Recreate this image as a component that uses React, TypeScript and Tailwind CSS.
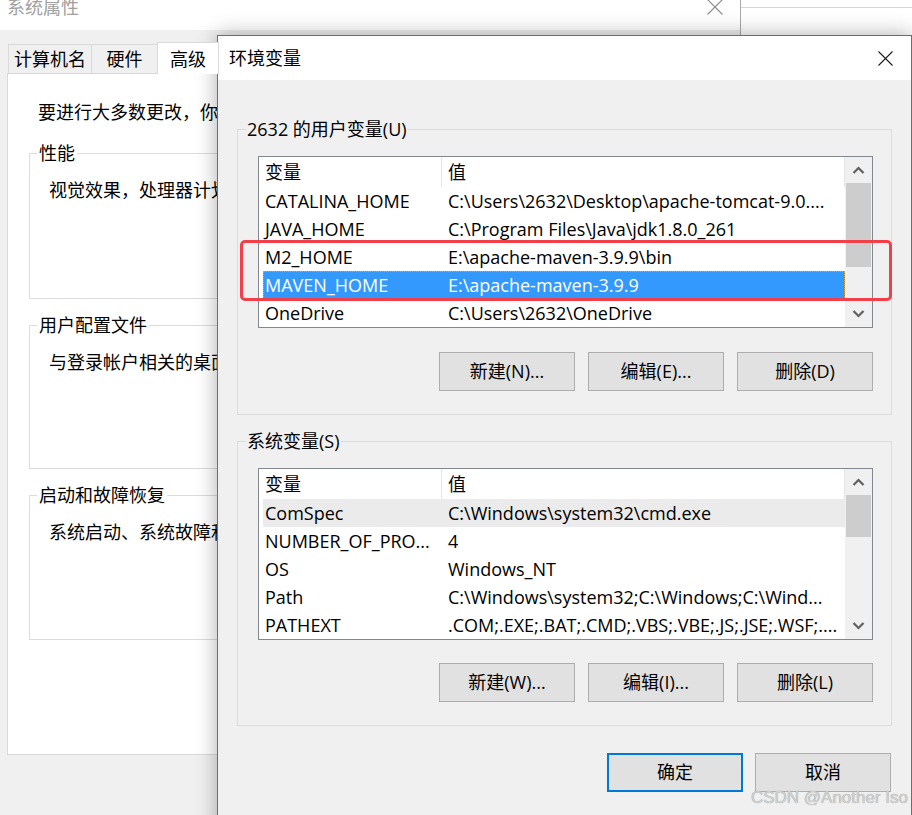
import React from "react";

const font = "font-['Open_Sans','Noto_Sans_CJK_SC',sans-serif]";

function Chevron({ up }: { up?: boolean }) {
  return (
    <svg width="13" height="8" viewBox="0 0 13 8">
      <polyline
        points={up ? "1.5,7 6.5,2 11.5,7" : "1.5,1 6.5,6 11.5,1"}
        fill="none"
        stroke="#606060"
        strokeWidth="2.2"
      />
    </svg>
  );
}

function CloseX({ size, color }: { size: number; color: string }) {
  return (
    <svg width={size} height={size} viewBox={`0 0 ${size} ${size}`}>
      <line x1="0.5" y1="0.5" x2={size - 0.5} y2={size - 0.5} stroke={color} strokeWidth="1.1" />
      <line x1={size - 0.5} y1="0.5" x2="0.5" y2={size - 0.5} stroke={color} strokeWidth="1.1" />
    </svg>
  );
}

type Row = { name: string; value: string; sel?: boolean; light?: boolean };

function VarList({ rows, thumbClass }: { rows: Row[]; thumbClass: string }) {
  return (
    <div className="w-[615px] h-[172px] border border-[#828790] bg-white flex">
      <div className="w-[586px] flex flex-col">
        <div className="h-[30px] flex items-center border-r border-[#e5e5e5]">
          <div className="w-[183px] h-full pl-[6px] flex items-center border-r border-[#e5e5e5]">变量</div>
          <div className="pl-[6px]">值</div>
        </div>
        {rows.map((r) => (
          <div
            key={r.name}
            className={
              "ml-[4px] h-[28px] flex items-center " +
              (r.sel
                ? "bg-[#3399ff] text-white outline-1 outline-dotted outline-[#d9a441] -outline-offset-1"
                : r.light
                ? "bg-[#ebebeb]"
                : "")
            }
          >
            <div className="w-[178px] shrink-0 pl-[2px] whitespace-nowrap overflow-hidden">{r.name}</div>
            <div className="pl-[7px] whitespace-nowrap overflow-hidden">{r.value}</div>
          </div>
        ))}
      </div>
      <div className="w-[27px] bg-[#f0f0f0] flex flex-col">
        <div className="h-[26px] flex items-center justify-center">
          <Chevron up />
        </div>
        <div className="flex-1 px-[1px]">
          <div className={thumbClass + " bg-[#cdcdcd]"} />
        </div>
        <div className="h-[26px] flex items-center justify-center">
          <Chevron />
        </div>
      </div>
    </div>
  );
}

function Btn({ label, primary }: { label: string; primary?: boolean }) {
  return (
    <div
      className={
        "w-[136px] h-[39px] bg-[#e1e1e1] flex items-center justify-center " +
        (primary ? "border-2 border-[#0078d7]" : "border border-[#adadad]")
      }
    >
      {label}
    </div>
  );
}

function BgGroup({ title, text, hClass }: { title: string; text: string; hClass: string }) {
  return (
    <div className={"ml-[21px] mr-[21px] border border-[#dcdcdc] " + hClass}>
      <div className="-mt-[13px] ml-[7px] px-[2px] bg-white w-fit leading-6">{title}</div>
      <div className="mt-[13px] pl-[19px] leading-6 whitespace-nowrap">{text}</div>
    </div>
  );
}

export default function App() {
  const userRows: Row[] = [
    { name: "CATALINA_HOME", value: "C:\\Users\\2632\\Desktop\\apache-tomcat-9.0...." },
    { name: "JAVA_HOME", value: "C:\\Program Files\\Java\\jdk1.8.0_261" },
    { name: "M2_HOME", value: "E:\\apache-maven-3.9.9\\bin" },
    { name: "MAVEN_HOME", value: "E:\\apache-maven-3.9.9", sel: true },
    { name: "OneDrive", value: "C:\\Users\\2632\\OneDrive" },
  ];
  const sysRows: Row[] = [
    { name: "ComSpec", value: "C:\\Windows\\system32\\cmd.exe", light: true },
    { name: "NUMBER_OF_PRO...", value: "4" },
    { name: "OS", value: "Windows_NT" },
    { name: "Path", value: "C:\\Windows\\system32;C:\\Windows;C:\\Wind..." },
    { name: "PATHEXT", value: ".COM;.EXE;.BAT;.CMD;.VBS;.VBE;.JS;.JSE;.WSF;...." },
  ];

  return (
    <div className={"relative w-[912px] h-[815px] overflow-hidden bg-white text-[18px] text-black " + font}>
      {/* edge of another window behind */}
      <div className="absolute left-[741px] top-[7px] w-[171px] h-px bg-[#d6d6d6]" />

      {/* 系统属性 (background window) */}
      <div className="absolute left-0 top-[-12px] w-[741px] h-[840px] border-r border-[#a8a8a8] bg-[#f0f0f0] flex flex-col">
        <div className="h-[42px] bg-white flex items-start justify-between pl-[7px] pr-[17px] pt-[7px]">
          <div className="leading-6 text-[#a0a0a0]">系统属性</div>
          <div className="h-6 flex items-center">
            <CloseX size={16} color="#8a8a8a" />
          </div>
        </div>
        <div className="pl-[7px] pt-[12px]">
          <div className="h-[31px] flex items-end pl-[1px]">
            <div className="w-[84px] h-[29px] border border-b-0 border-[#d9d9d9] flex items-center justify-center leading-6">
              计算机名
            </div>
            <div className="w-[66px] h-[29px] border-t border-r border-[#d9d9d9] flex items-center justify-center leading-6">
              硬件
            </div>
            <div className="relative z-10 w-[62px] h-[32px] -mb-px bg-white border-t border-r border-[#d9d9d9] flex items-center justify-center leading-6 -ml-px border-l">
              高级
            </div>
          </div>
          <div className="w-[727px] h-[682px] border border-[#d9d9d9] bg-white">
            <div className="pt-[26px] pl-[30px] leading-6 whitespace-nowrap">要进行大多数更改，你必须作为管理员登录。</div>
            <div className="mt-[29px] flex flex-col gap-[26px]">
              <BgGroup title="性能" text="视觉效果，处理器计划，内存使用，以及虚拟内存" hClass="h-[146px]" />
              <BgGroup title="用户配置文件" text="与登录帐户相关的桌面设置" hClass="h-[144px]" />
              <BgGroup title="启动和故障恢复" text="系统启动、系统故障和调试信息" hClass="h-[145px]" />
            </div>
          </div>
        </div>
      </div>

      {/* 环境变量 dialog */}
      <div className="absolute left-[217px] top-[35px] w-[695px] h-[800px] border border-[#1883d7] bg-[#f0f0f0] shadow-[0_0_20px_rgba(0,0,0,0.32)] flex flex-col">
        <div className="h-[44px] bg-white flex items-center justify-between pl-[11px] pr-[18px]">
          <div className="leading-6">环境变量</div>
          <CloseX size={15} color="#1a1a1a" />
        </div>
        <div className="px-[19px] pt-[49px] flex flex-col">
          <div className="border border-[#dcdcdc] pl-[20px] pr-[18px] pb-[23px]">
            <div className="-mt-[13px] -ml-[12px] px-px bg-[#f0f0f0] w-fit leading-6">2632 的用户变量(U)</div>
            <div className="mt-[15px]">
              <VarList rows={userRows} thumbClass="h-[84px]" />
            </div>
            <div className="mt-[24px] flex justify-end gap-[13px]">
              <Btn label="新建(N)..." />
              <Btn label="编辑(E)..." />
              <Btn label="删除(D)" />
            </div>
          </div>
          <div className="mt-[26px] border border-[#dcdcdc] pl-[20px] pr-[18px] pb-[23px]">
            <div className="-mt-[13px] -ml-[12px] px-px bg-[#f0f0f0] w-fit leading-6">系统变量(S)</div>
            <div className="mt-[15px]">
              <VarList rows={sysRows} thumbClass="h-[42px]" />
            </div>
            <div className="mt-[23px] flex justify-end gap-[13px]">
              <Btn label="新建(W)..." />
              <Btn label="编辑(I)..." />
              <Btn label="删除(L)" />
            </div>
          </div>
          <div className="mt-[27px] pr-px flex justify-end gap-[12px]">
            <Btn label="确定" primary />
            <Btn label="取消" />
          </div>
        </div>

        {/* red annotation */}
        <div className="absolute left-[22px] top-[204px] w-[652px] h-[61px] border-[3px] border-[#f2404a] rounded-[5px]" />
      </div>

      {/* watermark */}
      <div className="absolute right-[4px] bottom-[5px] font-['Liberation_Sans',sans-serif] text-[17px] text-[#cfcfcf] [text-shadow:0_0_1px_#9a9a9a]">
        CSDN @Another Iso
      </div>
    </div>
  );
}
